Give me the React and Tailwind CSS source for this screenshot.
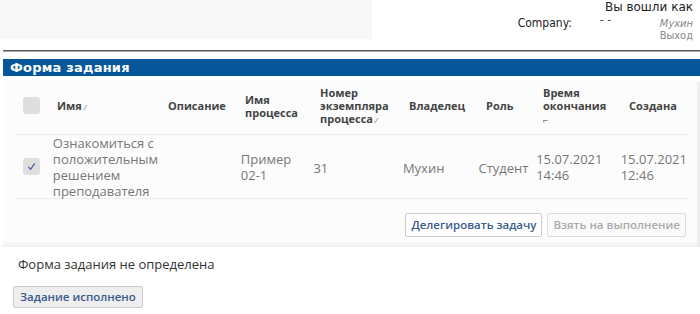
import React from "react";

const sans = { fontFamily: '"Open Sans", "Noto Sans", sans-serif' };
const cond = { fontFamily: '"DejaVu Sans Condensed", "DejaVu Sans", sans-serif' };

function Check({ checked }) {
  return (
    <div className="w-[17px] h-[17px] rounded-[3px] bg-[#dedede] flex items-center justify-center">
      {checked && (
        <svg width="9" height="9" viewBox="0 0 10 10">
          <path d="M1.5 5.5 L4 8.2 L8.6 1.5" fill="none" stroke="#3b5b9a" strokeWidth="1.3" />
        </svg>
      )}
    </div>
  );
}

export default function App() {
  return (
    <div className="w-[700px] h-[314px] bg-white overflow-hidden" style={{ fontFamily: '"DejaVu Sans", Verdana, sans-serif' }}>
      {/* top */}
      <div className="flex h-[39px]">
        <div className="w-[372px] bg-[#f8f8f8]" />
        <div className="flex-1 flex flex-col items-end pr-[7px] text-[11px] leading-[13px] text-[#222]">
          <div className="text-[12px] leading-[13px] mt-[1px]">Вы вошли как</div>
          <div className="flex items-start h-[13px] mt-[2px]">
            <span className="mt-[1px] text-[12px]" style={cond}>Company:</span>
            <span className="ml-[28px] w-[60px] text-[#333] leading-[8px]">- -</span>
            <span className="italic text-[#888] mt-[1px]" style={cond}>Мухин</span>
          </div>
          <div className="text-[#888] h-[13px]" style={cond}>Выход</div>
        </div>
      </div>
      <div className="h-[11px]" />
      <div className="ml-[3px] h-[2px] bg-[#5a5a5a] border-b border-[#aaa]" />
      <div className="h-[7px]" />
      {/* blue bar */}
      <div className="ml-[3px] h-[17px] bg-[#05579a] flex items-center pl-[7px]">
        <span className="text-white font-bold text-[13px] leading-[16px] tracking-[0.2px]">Форма задания</span>
      </div>
      {/* table panel */}
      <div className="flex mt-[3px]">
        <div className="ml-[3px] w-[694px] bg-[#fcfcfc]" style={sans}>
          <div className="ml-[12px] w-[672px]">
            {/* header */}
            <div className="flex items-center h-[56px] pb-[2px] border-b border-[#ececec] text-[11px] font-bold text-[#444] leading-[13px]">
              <div className="w-[42px] pl-[8px]"><Check /></div>
              <div className="w-[111px]">Имя <span className="font-normal text-[8px]">⁄</span></div>
              <div className="w-[77px]">Описание</div>
              <div className="w-[75px]">Имя<br />процесса</div>
              <div className="w-[89px]">Номер<br />экземпляра<br />процесса <span className="font-normal text-[8px]">⁄</span></div>
              <div className="w-[77px]">Владелец</div>
              <div className="w-[57px]">Роль</div>
              <div className="w-[86px]">Время<br />окончания<br /><span className="font-normal text-[9px]">⌐</span></div>
              <div>Создана</div>
            </div>
            {/* row */}
            <div className="flex items-center h-[64px] border-b border-[#ececec] text-[13px] leading-[16px] text-[#777]">
              <div className="w-[38px] pl-[8px]"><Check checked /></div>
              <div className="w-[189px]">Ознакомиться с<br />положительным<br />решением<br />преподавателя</div>
              <div className="w-[73px]">Пример<br />02-1</div>
              <div className="w-[90px] mt-[2px]">31</div>
              <div className="w-[76px] mt-[2px]">Мухин</div>
              <div className="w-[58px] mt-[2px]">Студент</div>
              <div className="w-[85px]">15.07.2021<br />14:46</div>
              <div>15.07.2021<br />12:46</div>
            </div>
            <div className="flex justify-end gap-[5px] pt-[14px] pb-[4px] pr-[1px]">
              <button className="h-[24px] px-[5px] border border-[#ccc] rounded-[2px] bg-white text-[11.5px] font-semibold text-[#3a5b8c]">Делегировать задачу</button>
              <button className="h-[24px] px-[5px] border border-[#ddd] rounded-[2px] bg-[#fafafa] text-[11.5px] font-semibold text-[#aaa]">Взять на выполнение</button>
            </div>
          </div>
          <div className="h-[6px] bg-gradient-to-b from-[#fcfcfc] to-[#f0f0f0]" />
        </div>
        <div className="w-[3px] bg-[#eeeeee] mt-[3px]" />
      </div>
      {/* second panel */}
      <div className="ml-[5px] w-[692px] bg-white" style={sans}>
        <div className="pl-[13px] pt-[9px] text-[13px] leading-[16px] text-[#333]">Форма задания не определена</div>
        <div className="pl-[8px] mt-[11px]">
          <button className="h-[22px] px-[6px] border border-[#ccc] rounded-[2px] bg-[#eeeeee] text-[11.5px] font-semibold text-[#3a5b8c]">Задание исполнено</button>
        </div>
      </div>
    </div>
  );
}
